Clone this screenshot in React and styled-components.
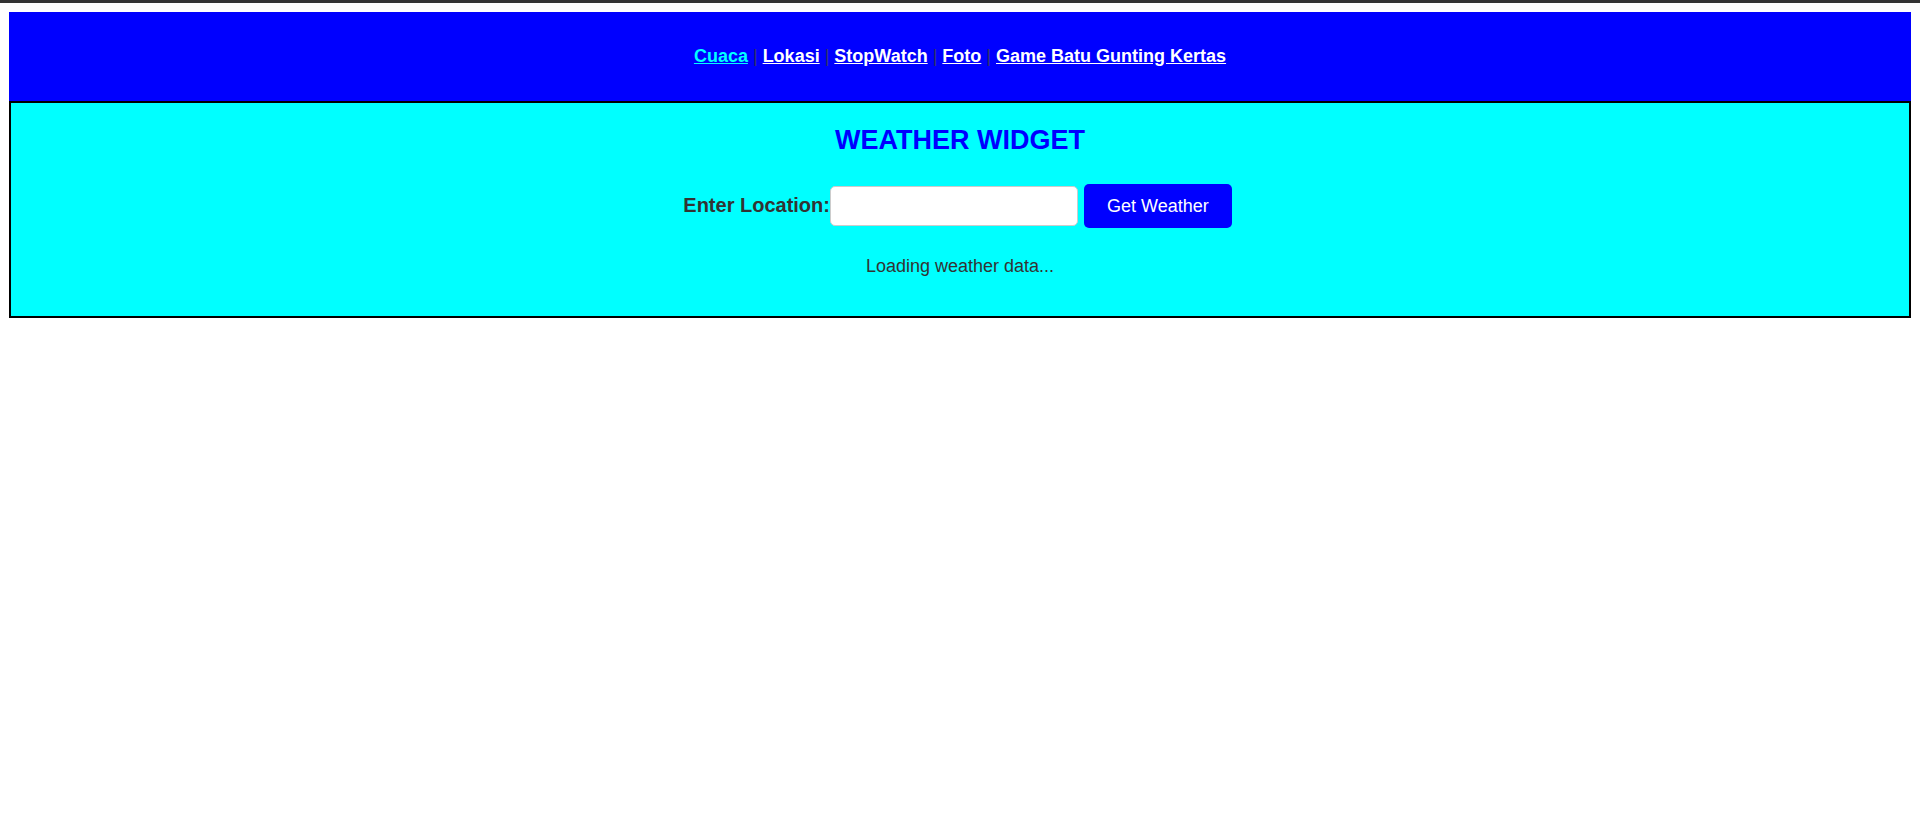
import styled, { createGlobalStyle } from "styled-components";

const GlobalStyle = createGlobalStyle`
  html, body {
    margin: 0;
    padding: 0;
    background: #ffffff;
    font-family: "Liberation Sans", Arial, sans-serif;
  }
`;

const TopBar = styled.div`
  height: 3px;
  background: #333333;
`;

const Page = styled.div`
  padding: 9px 9px 0 9px;
`;

const Header = styled.header`
  background: #0000ff;
  padding: 34px 0;
  display: flex;
  justify-content: center;
  align-items: center;
`;

const NavLink = styled.a`
  font-size: 18px;
  line-height: 21px;
  font-weight: bold;
  text-decoration: underline;
  color: ${(p) => (p.$active ? "#00ffff" : "#ffffff")};
  cursor: pointer;
`;

const Sep = styled.span`
  font-size: 18px;
  line-height: 21px;
  color: #333366;
  padding: 0 5px;
`;

const Widget = styled.section`
  background: #00ffff;
  border: 2px solid #000000;
  padding: 22px 0 39px;
  display: flex;
  flex-direction: column;
  align-items: center;
`;

const Title = styled.h2`
  margin: 0 0 28px;
  font-size: 27px;
  line-height: 31px;
  font-weight: bold;
  color: #0000ff;
`;

const Form = styled.div`
  display: flex;
  align-items: center;
  gap: 6px;
  margin-right: 5px;
`;

const Label = styled.label`
  font-size: 20px;
  font-weight: bold;
  color: #333333;
  margin-right: -6px;
  margin-top: -2px;
`;

const Input = styled.input`
  width: 248px;
  height: 40px;
  box-sizing: border-box;
  border: 1px solid #cccccc;
  border-radius: 5px;
  background: #ffffff;
  font-size: 16px;
  padding: 0 8px;
  outline: none;
`;

const Button = styled.button`
  height: 44px;
  padding: 0 23px;
  border: none;
  border-radius: 5px;
  background: #0000ff;
  color: #ffffff;
  font-family: "Liberation Sans", Arial, sans-serif;
  font-size: 18px;
  cursor: pointer;
`;

const Status = styled.p`
  margin: 28px 0 0;
  font-size: 18px;
  line-height: 21px;
  color: #333333;
`;

const links = ["Cuaca", "Lokasi", "StopWatch", "Foto", "Game Batu Gunting Kertas"];

export default function App() {
  return (
    <>
      <GlobalStyle />
      <TopBar />
      <Page>
        <Header>
          <nav>
            {links.map((l, i) => (
              <span key={l}>
                {i > 0 && <Sep>|</Sep>}
                <NavLink $active={i === 0}>{l}</NavLink>
              </span>
            ))}
          </nav>
        </Header>
        <Widget>
          <Title>WEATHER WIDGET</Title>
          <Form>
            <Label htmlFor="loc">Enter Location:</Label>
            <Input id="loc" type="text" />
            <Button>Get Weather</Button>
          </Form>
          <Status>Loading weather data...</Status>
        </Widget>
      </Page>
    </>
  );
}
